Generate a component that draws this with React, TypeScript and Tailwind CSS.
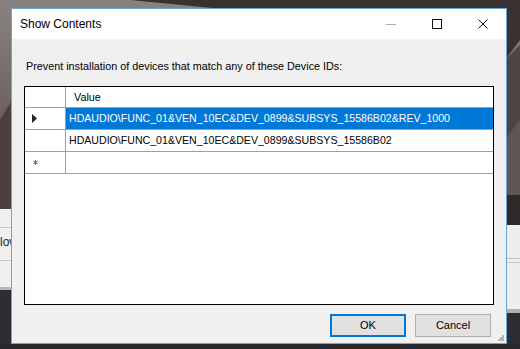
import React from "react";

const font = { fontFamily: '"Liberation Sans", Arial, sans-serif' };

function Wallpaper() {
  return (
    <svg className="absolute inset-0" width="520" height="349" viewBox="0 0 520 349">
      <defs>
        <linearGradient id="lg" x1="0" y1="0" x2="0" y2="1">
          <stop offset="0" stopColor="#8a8181" />
          <stop offset="0.5" stopColor="#6f6565" />
          <stop offset="1" stopColor="#3b3232" />
        </linearGradient>
      </defs>
      <rect x="0" y="0" width="520" height="349" fill="#2c2e33" />
      <rect x="0" y="0" width="520" height="210" fill="url(#lg)" />
      <polygon points="130,0 520,0 520,40 505,60 440,30" fill="#3a3131" />
      <polygon points="0,120 12,100 12,210 0,210" fill="#4a4040" />
      <polygon points="505,60 520,45 520,120 505,140" fill="#4d4444" />
      <polygon points="505,140 520,120 520,225 505,225" fill="#5e5555" />
      <rect x="505" y="195" width="15" height="30" fill="#2e2828" />
      <rect x="0" y="344" width="520" height="5" fill="#26282c" />
    </svg>
  );
}

function BackWindows() {
  return (
    <>
      <div className="absolute left-0 top-[209px] w-[14px] h-[81px] bg-[#f0f0f0]" style={{ ...font }}>
        <div className="absolute left-0 top-[18px] w-full h-px bg-[#c8c8c8]" />
        <div className="absolute left-0 top-[26px] text-[12px] leading-[14px] text-[#222]">low</div>
        <div className="absolute left-0 top-[51px] w-full h-px bg-[#c8c8c8]" />
        <div className="absolute left-0 top-[78px] w-full h-[3px] bg-[#b8b8b8]" />
      </div>
      <div className="absolute left-[505px] top-[225px] w-[15px] h-[88px] bg-[#eeeeee]">
        <div className="absolute left-0 top-[33px] w-full h-px bg-[#c0c0c0]" />
        <div className="absolute left-0 top-[37px] w-full h-px bg-[#c8c8c8]" />
        <div className="absolute left-0 top-[84px] w-full h-[4px] bg-[#b0b0b0]" />
      </div>
    </>
  );
}

function Arrow() {
  return (
    <svg width="5" height="9" viewBox="0 0 5 9">
      <polygon points="0,0 5,4.5 0,9" fill="#222" />
    </svg>
  );
}

function Star() {
  return (
    <svg width="5" height="5" viewBox="0 0 5 5">
      <g stroke="#666" strokeWidth="1">
        <line x1="2.5" y1="0" x2="2.5" y2="5" />
        <line x1="0.3" y1="1.3" x2="4.7" y2="3.7" />
        <line x1="0.3" y1="3.7" x2="4.7" y2="1.3" />
      </g>
    </svg>
  );
}

function Grip() {
  const dots = [
    [4, 0],
    [2, 2],
    [4, 2],
    [0, 4],
    [2, 4],
    [4, 4],
  ];
  return (
    <svg width="6" height="6" viewBox="0 0 6 6">
      {dots.map(([x, y], i) => (
        <rect key={i} x={x} y={y} width="2" height="2" fill="#b4b4b4" />
      ))}
    </svg>
  );
}

const rows = [
  { header: "arrow", value: "HDAUDIO\\FUNC_01&VEN_10EC&DEV_0899&SUBSYS_15586B02&REV_1000", selected: true },
  { header: "", value: "HDAUDIO\\FUNC_01&VEN_10EC&DEV_0899&SUBSYS_15586B02", selected: false },
  { header: "star", value: "", selected: false },
];

export default function App() {
  return (
    <div className="relative w-[520px] h-[349px] overflow-hidden" style={font}>
      <Wallpaper />
      <BackWindows />
      <div className="absolute left-[11px] top-[8px] w-[496px] h-[336px] border border-[#6aa6da] bg-[#f0f0f0] flex flex-col">
        <div className="h-[30px] bg-white flex items-center shrink-0">
          <span className="pl-[8px] text-[12px] text-black">Show Contents</span>
          <div className="ml-auto flex h-full">
            <div className="w-[46px] h-full flex items-center justify-center">
              <div className="w-[10px] h-px bg-[#b0b0b0]" />
            </div>
            <div className="w-[46px] h-full flex items-center justify-center">
              <div className="w-[10px] h-[10px] border border-[#111]" />
            </div>
            <div className="w-[46px] h-full flex items-center justify-center">
              <svg width="10" height="10" viewBox="0 0 10 10">
                <path d="M0.5 0.5L9.5 9.5M9.5 0.5L0.5 9.5" stroke="#111" strokeWidth="1" />
              </svg>
            </div>
          </div>
        </div>
        <div className="flex-1 flex flex-col px-[12px] pt-[21px]">
          <div className="pl-[2px] text-[10.8px] leading-[13px] text-black">
            Prevent installation of devices that match any of these Device IDs:
          </div>
          <div className="mt-[13px] h-[219px] border border-black bg-white flex flex-col shrink-0">
            <div className="flex h-[21px] border-b border-[#a0a0a0]">
              <div className="w-[41px] border-r border-[#a0a0a0]" />
              <div className="flex-1 flex items-center pl-[8px] text-[10.8px] text-black">Value</div>
            </div>
            {rows.map((r, i) => (
              <div key={i} className="flex h-[22px] border-b border-[#a0a0a0]">
                <div className="w-[41px] border-r border-[#a0a0a0] flex items-center pl-[7px]">
                  {r.header === "arrow" && <Arrow />}
                  {r.header === "star" && (
                    <span className="pl-[1px] flex">
                      <Star />
                    </span>
                  )}
                </div>
                <div
                  className={
                    r.selected
                      ? "flex-1 flex items-center pl-[3px] text-[10.6px] bg-[#0078d7] text-white whitespace-nowrap"
                      : "flex-1 flex items-center pl-[3px] text-[10.6px] text-black whitespace-nowrap"
                  }
                >
                  {r.value}
                </div>
              </div>
            ))}
          </div>
          <div className="mt-[9px] flex justify-end gap-[9px] pr-[3px]">
            <button className="w-[76px] h-[23px] border-2 border-[#0078d7] bg-[#e1e1e1] text-[11px] text-black">
              OK
            </button>
            <button className="w-[76px] h-[23px] border border-[#adadad] bg-[#e1e1e1] text-[11px] text-black">
              Cancel
            </button>
          </div>
        </div>
        <div className="absolute right-[2px] bottom-[2px] flex">
          <Grip />
        </div>
      </div>
    </div>
  );
}
